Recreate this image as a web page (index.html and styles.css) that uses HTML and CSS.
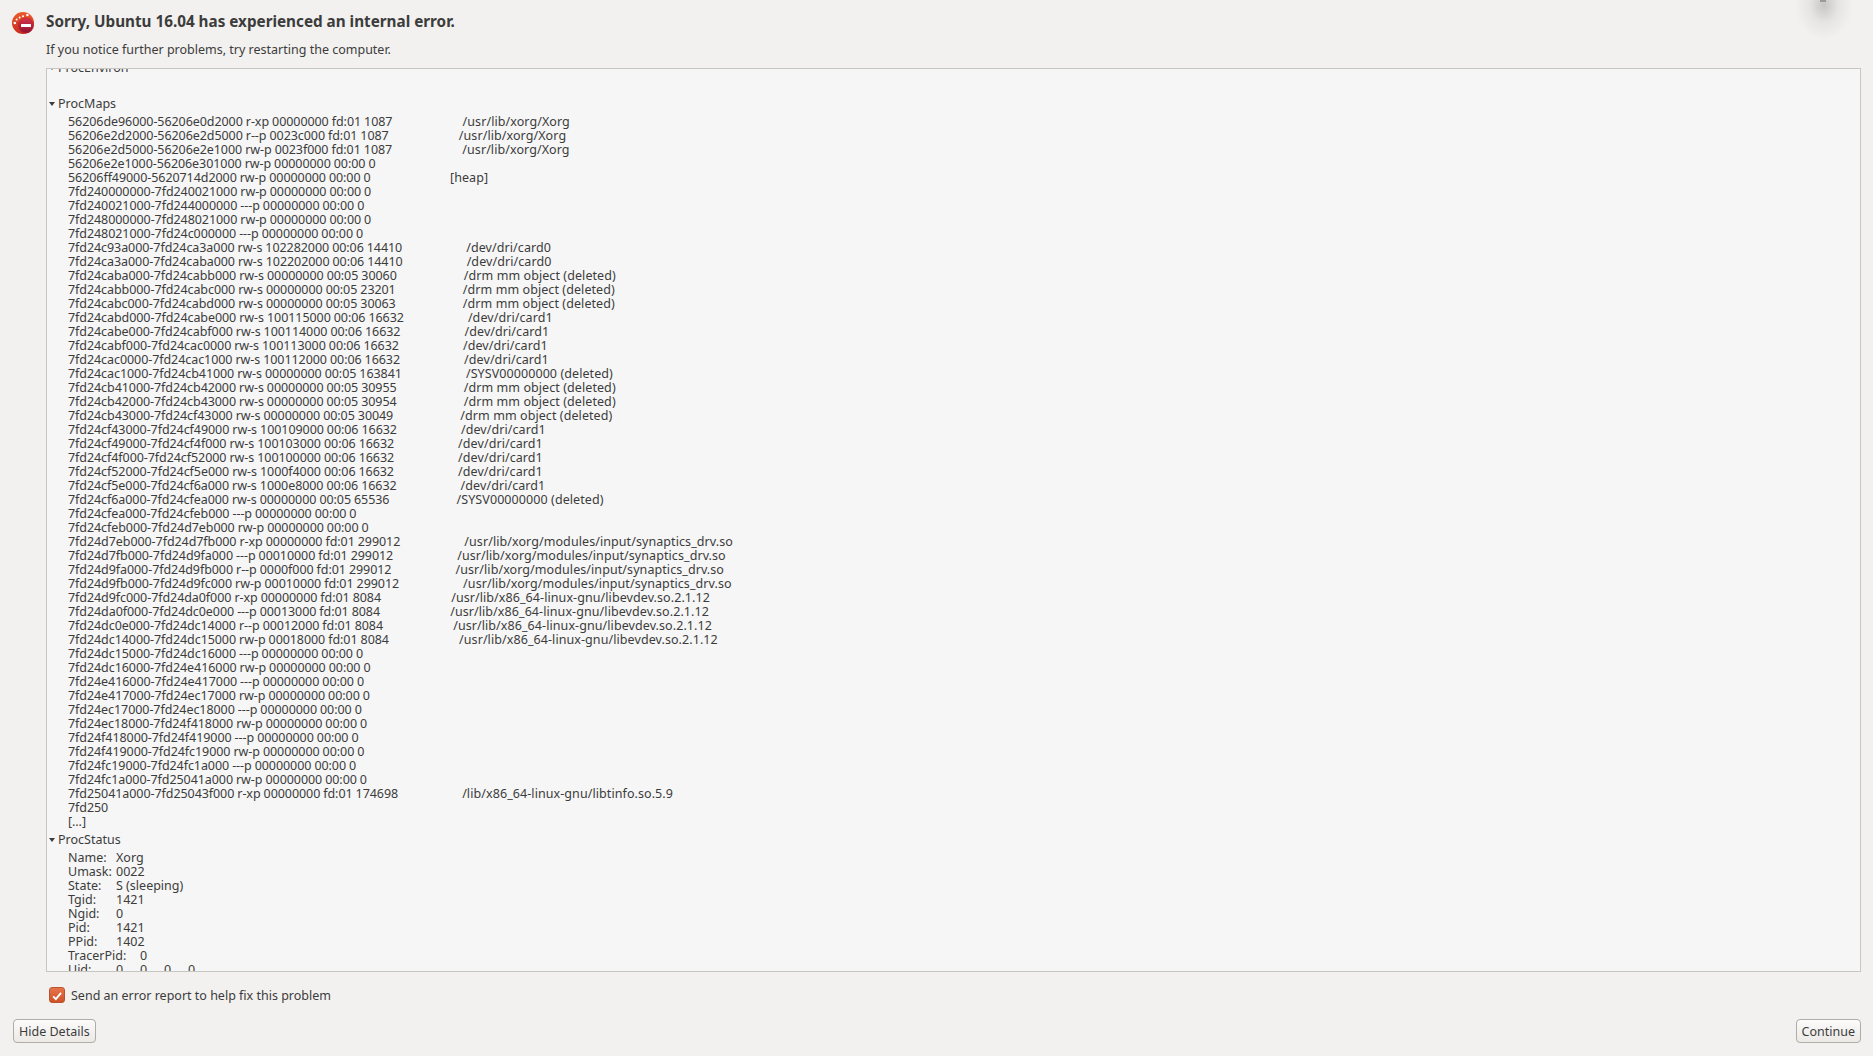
FILE: index.html
```html
<!DOCTYPE html>
<html lang="en">
<head>
<meta charset="utf-8">
<title>Ubuntu error report</title>
<link rel="stylesheet" href="styles.css">
</head>
<body>
<div class="cursor-shadow"></div>
<main class="dialog">
  <header class="head">
    <svg class="app-icon" viewBox="0 0 24 24" width="24" height="24" aria-hidden="true">
      <defs>
        <linearGradient id="disc" x1="0" y1="0" x2="0" y2="1"><stop offset="0" stop-color="#ec5a2c"/><stop offset="1" stop-color="#c92b1c"/></linearGradient>
        <linearGradient id="stop" x1="0" y1="0" x2="0" y2="1"><stop offset="0" stop-color="#d8344a"/><stop offset="1" stop-color="#8f1230"/></linearGradient>
      </defs>
      <circle cx="12" cy="12" r="11" fill="url(#disc)"/>
      <g fill="#fff"><circle cx="3.8" cy="12" r="1.3"/><circle cx="5.6" cy="8.6" r="1"/><circle cx="8.6" cy="6.4" r="1"/><circle cx="12" cy="5.2" r="1"/><circle cx="16.4" cy="4" r="1.3"/></g>
      <circle cx="15" cy="14.5" r="7.5" fill="url(#stop)" stroke="#b5202e" stroke-width=".6"/>
      <rect x="10" y="13" width="10" height="3" rx=".5" fill="#fff"/>
    </svg>
    <div class="head-text">
      <h1 class="title">Sorry, Ubuntu 16.04 has experienced an internal error.</h1>
      <p class="subtitle">If you notice further problems, try restarting the computer.</p>
    </div>
  </header>

  <section class="details">
    <div class="tree">
      <div class="node">
        <div class="key"><span class="arrow"></span>ProcEnviron</div>
        <pre class="value"> </pre>
      </div>
      <div class="node">
        <div class="key"><span class="arrow"></span>ProcMaps</div>
<pre class="value maps">56206de96000-56206e0d2000 r-xp 00000000 fd:01 1087                       <span class="path">/usr/lib/xorg/Xorg</span>
56206e2d2000-56206e2d5000 r--p 0023c000 fd:01 1087                       <span class="path">/usr/lib/xorg/Xorg</span>
56206e2d5000-56206e2e1000 rw-p 0023f000 fd:01 1087                       <span class="path">/usr/lib/xorg/Xorg</span>
56206e2e1000-56206e301000 rw-p 00000000 00:00 0 
56206ff49000-5620714d2000 rw-p 00000000 00:00 0                          <span class="path">[heap]</span>
7fd240000000-7fd240021000 rw-p 00000000 00:00 0 
7fd240021000-7fd244000000 ---p 00000000 00:00 0 
7fd248000000-7fd248021000 rw-p 00000000 00:00 0 
7fd248021000-7fd24c000000 ---p 00000000 00:00 0 
7fd24c93a000-7fd24ca3a000 rw-s 102282000 00:06 14410                     <span class="path">/dev/dri/card0</span>
7fd24ca3a000-7fd24caba000 rw-s 102202000 00:06 14410                     <span class="path">/dev/dri/card0</span>
7fd24caba000-7fd24cabb000 rw-s 00000000 00:05 30060                      <span class="path">/drm mm object (deleted)</span>
7fd24cabb000-7fd24cabc000 rw-s 00000000 00:05 23201                      <span class="path">/drm mm object (deleted)</span>
7fd24cabc000-7fd24cabd000 rw-s 00000000 00:05 30063                      <span class="path">/drm mm object (deleted)</span>
7fd24cabd000-7fd24cabe000 rw-s 100115000 00:06 16632                     <span class="path">/dev/dri/card1</span>
7fd24cabe000-7fd24cabf000 rw-s 100114000 00:06 16632                     <span class="path">/dev/dri/card1</span>
7fd24cabf000-7fd24cac0000 rw-s 100113000 00:06 16632                     <span class="path">/dev/dri/card1</span>
7fd24cac0000-7fd24cac1000 rw-s 100112000 00:06 16632                     <span class="path">/dev/dri/card1</span>
7fd24cac1000-7fd24cb41000 rw-s 00000000 00:05 163841                     <span class="path">/SYSV00000000 (deleted)</span>
7fd24cb41000-7fd24cb42000 rw-s 00000000 00:05 30955                      <span class="path">/drm mm object (deleted)</span>
7fd24cb42000-7fd24cb43000 rw-s 00000000 00:05 30954                      <span class="path">/drm mm object (deleted)</span>
7fd24cb43000-7fd24cf43000 rw-s 00000000 00:05 30049                      <span class="path">/drm mm object (deleted)</span>
7fd24cf43000-7fd24cf49000 rw-s 100109000 00:06 16632                     <span class="path">/dev/dri/card1</span>
7fd24cf49000-7fd24cf4f000 rw-s 100103000 00:06 16632                     <span class="path">/dev/dri/card1</span>
7fd24cf4f000-7fd24cf52000 rw-s 100100000 00:06 16632                     <span class="path">/dev/dri/card1</span>
7fd24cf52000-7fd24cf5e000 rw-s 1000f4000 00:06 16632                     <span class="path">/dev/dri/card1</span>
7fd24cf5e000-7fd24cf6a000 rw-s 1000e8000 00:06 16632                     <span class="path">/dev/dri/card1</span>
7fd24cf6a000-7fd24cfea000 rw-s 00000000 00:05 65536                      <span class="path">/SYSV00000000 (deleted)</span>
7fd24cfea000-7fd24cfeb000 ---p 00000000 00:00 0 
7fd24cfeb000-7fd24d7eb000 rw-p 00000000 00:00 0 
7fd24d7eb000-7fd24d7fb000 r-xp 00000000 fd:01 299012                     <span class="path">/usr/lib/xorg/modules/input/synaptics_drv.so</span>
7fd24d7fb000-7fd24d9fa000 ---p 00010000 fd:01 299012                     <span class="path">/usr/lib/xorg/modules/input/synaptics_drv.so</span>
7fd24d9fa000-7fd24d9fb000 r--p 0000f000 fd:01 299012                     <span class="path">/usr/lib/xorg/modules/input/synaptics_drv.so</span>
7fd24d9fb000-7fd24d9fc000 rw-p 00010000 fd:01 299012                     <span class="path">/usr/lib/xorg/modules/input/synaptics_drv.so</span>
7fd24d9fc000-7fd24da0f000 r-xp 00000000 fd:01 8084                       <span class="path">/usr/lib/x86_64-linux-gnu/libevdev.so.2.1.12</span>
7fd24da0f000-7fd24dc0e000 ---p 00013000 fd:01 8084                       <span class="path">/usr/lib/x86_64-linux-gnu/libevdev.so.2.1.12</span>
7fd24dc0e000-7fd24dc14000 r--p 00012000 fd:01 8084                       <span class="path">/usr/lib/x86_64-linux-gnu/libevdev.so.2.1.12</span>
7fd24dc14000-7fd24dc15000 rw-p 00018000 fd:01 8084                       <span class="path">/usr/lib/x86_64-linux-gnu/libevdev.so.2.1.12</span>
7fd24dc15000-7fd24dc16000 ---p 00000000 00:00 0 
7fd24dc16000-7fd24e416000 rw-p 00000000 00:00 0 
7fd24e416000-7fd24e417000 ---p 00000000 00:00 0 
7fd24e417000-7fd24ec17000 rw-p 00000000 00:00 0 
7fd24ec17000-7fd24ec18000 ---p 00000000 00:00 0 
7fd24ec18000-7fd24f418000 rw-p 00000000 00:00 0 
7fd24f418000-7fd24f419000 ---p 00000000 00:00 0 
7fd24f419000-7fd24fc19000 rw-p 00000000 00:00 0 
7fd24fc19000-7fd24fc1a000 ---p 00000000 00:00 0 
7fd24fc1a000-7fd25041a000 rw-p 00000000 00:00 0 
7fd25041a000-7fd25043f000 r-xp 00000000 fd:01 174698                     <span class="path">/lib/x86_64-linux-gnu/libtinfo.so.5.9</span>
7fd250
[...]</pre>
      </div>
      <div class="node">
        <div class="key"><span class="arrow"></span>ProcStatus</div>
<pre class="value">Name:	Xorg
Umask:	0022
State:	S (sleeping)
Tgid:	1421
Ngid:	0
Pid:		1421
PPid:	1402
TracerPid:	0
Uid:	0	0	0	0</pre>
      </div>
    </div>
  </section>

  <label class="consent">
    <span class="checkbox">
      <svg viewBox="0 0 16 16" width="16" height="16" aria-hidden="true"><path d="M3.6 8.4 L6.7 11.6 L12.6 4.4" fill="none" stroke="#fff" stroke-width="2.2"/></svg>
    </span>
    <span class="consent-text">Send an error report to help fix this problem</span>
  </label>

  <footer class="actions">
    <button class="btn" type="button">Hide Details</button>
    <button class="btn" type="button">Continue</button>
  </footer>
</main>
</body>
</html>
```

FILE: styles.css
```css
* { box-sizing: border-box; }

html, body {
  margin: 0;
  height: 100%;
  overflow: hidden;
}

body {
  background: #f2f1ef;
  color: #3c3c3c;
  font: 12.5px/14px "Noto Sans", "Open Sans", sans-serif;
}

.dialog {
  height: 100vh;
  display: flex;
  flex-direction: column;
  padding: 11px 12px 13px 13px;
}

.head {
  display: flex;
  align-items: flex-start;
  gap: 11px;
  margin-bottom: 9px;
}

.app-icon {
  flex: none;
  margin-left: -2px;
}

.title {
  margin: 0;
  font-size: 15.25px;
  line-height: 20px;
  font-weight: 700;
}

.subtitle {
  margin: 10px 0 0;
  line-height: 18px;
}

.details {
  flex: 1;
  min-height: 0;
  margin-left: 33px;
  overflow: hidden;
  background: #f6f6f6;
  border: 1px solid #c9c6c1;
}

.tree {
  margin-top: -10px;
}

.node {
  padding-bottom: 2px;
}

.key {
  height: 18px;
  line-height: 18px;
  padding-left: 2px;
  display: flex;
  align-items: center;
  gap: 3px;
}

.arrow {
  width: 0;
  height: 0;
  border-left: 3.5px solid transparent;
  border-right: 3.5px solid transparent;
  border-top: 4px solid #3c3c3c;
}

.value {
  margin: 2px 0 0 21px;
  font: inherit;
  white-space: pre;
  tab-size: 24px;
}

.maps {
  letter-spacing: -0.07px;
  word-spacing: -0.13px;
}

.path {
  letter-spacing: 0.08px;
  word-spacing: 0;
}

.consent {
  display: flex;
  align-items: center;
  gap: 6px;
  height: 18px;
  margin: 14px 0 0 36px;
}

.consent-text {
  padding-top: 2px;
}

.checkbox {
  flex: none;
  width: 16px;
  height: 16px;
  border: 1px solid #b8552c;
  border-radius: 3px;
  background: linear-gradient(#e8734a, #cf5227);
  display: flex;
}

.actions {
  display: flex;
  justify-content: space-between;
  margin-top: 15px;
}

.btn {
  height: 24px;
  padding: 2px 5px 0;
  font: inherit;
  color: #3c3c3c;
  background: linear-gradient(#fbfbfa, #ece9e6);
  border: 1px solid #b0aca6;
  border-radius: 4px;
}

.cursor-shadow {
  position: absolute;
  left: 1795px;
  top: -30px;
  width: 58px;
  height: 70px;
  background: radial-gradient(closest-side, rgba(0,0,0,.18), rgba(0,0,0,.05) 50%, rgba(0,0,0,0));
  pointer-events: none;
}

.cursor-shadow::after {
  content: "";
  position: absolute;
  left: 25px;
  top: 30px;
  width: 6px;
  height: 2px;
  background: #999;
}
```
